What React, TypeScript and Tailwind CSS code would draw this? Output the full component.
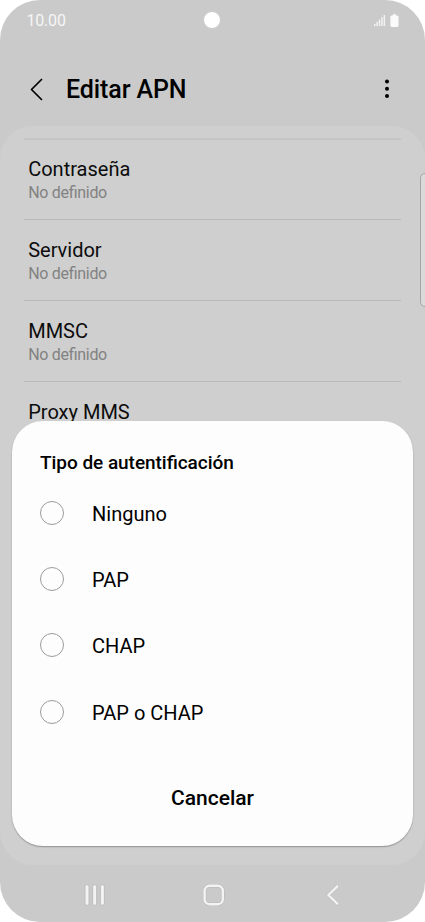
const fields = [
  { label: "Contraseña", value: "No definido" },
  { label: "Servidor", value: "No definido" },
  { label: "MMSC", value: "No definido" },
  { label: "Proxy MMS", value: "No definido" },
];

const options = ["Ninguno", "PAP", "CHAP", "PAP o CHAP"];

function StatusBar() {
  return (
    <div className="relative flex h-10 items-center justify-between pr-[25px] pl-[26.5px] text-white">
      <span className="pt-px text-[16px] leading-5 tracking-[-0.2px] text-[#f6f6f6]">10.00</span>
      <span className="absolute top-[12px] left-[204px] h-4 w-4 rounded-full bg-white" />
      <svg className="mt-[2px]" width="26" height="14" viewBox="0 0 26 14" fill="#fafafa">
        <g opacity="0.85">
          <rect x="0" y="9.8" width="1.5" height="2.2" />
          <rect x="2.4" y="7.8" width="1.5" height="4.2" />
          <rect x="4.8" y="5.6" width="1.5" height="6.4" />
          <rect x="7.2" y="3.2" width="1.5" height="8.8" />
          <rect x="9.6" y="1" width="1.5" height="11" />
        </g>
        <path d="M18.8 0.3h3.2v1.1h1q1.5 0 1.5 1.5v8.6q0 1.4-1.5 1.4h-5.1q-1.5 0-1.5-1.4V2.9q0-1.5 1.5-1.5h0.9z" />
      </svg>
    </div>
  );
}

function Header() {
  return (
    <header className="flex h-[86px] items-center pt-[12px] pr-[34px] pl-[30px]">
      <svg className="-mt-px" width="14" height="24" viewBox="0 0 14 24" fill="none" stroke="#000" strokeWidth="1.7" strokeLinecap="round" strokeLinejoin="round">
        <path d="M11.5 2.5L1.5 12.5l10 10" />
      </svg>
      <h1 className="mt-px ml-[22px] flex-1 text-[25px] leading-8 font-medium tracking-[-0.1px] text-black">Editar APN</h1>
      <svg width="8" height="22" viewBox="0 0 8 22" fill="#000">
        <circle cx="4" cy="3.4" r="2" />
        <circle cx="4" cy="10.7" r="2" />
        <circle cx="4" cy="18" r="2" />
      </svg>
    </header>
  );
}

function NavBar() {
  return (
    <nav className="flex h-[57px] items-center pt-[2px] pl-[83px]">
      <svg width="24" height="24" viewBox="0 0 24 24" fill="#f3f3f3" stroke="#b9b9b9" strokeWidth="0.9">
        <rect x="2" y="1.8" width="4" height="20.4" rx="1.5" />
        <rect x="9.7" y="1.8" width="4" height="20.4" rx="1.5" />
        <rect x="17.4" y="1.8" width="4" height="20.4" rx="1.5" />
      </svg>
      <svg className="ml-[95px]" width="24" height="24" viewBox="0 0 24 24" fill="none">
        <rect x="2.6" y="2.8" width="18.2" height="18.4" rx="5" stroke="#bcbcbc" strokeWidth="3.7" />
        <rect x="2.6" y="2.8" width="18.2" height="18.4" rx="5" stroke="#f3f3f3" strokeWidth="2.4" />
      </svg>
      <svg className="ml-[99px]" width="16" height="24" viewBox="0 0 16 24" fill="none" strokeLinecap="round" strokeLinejoin="round">
        <path d="M12.3 3.3L3.3 12l9 8.7" stroke="#bcbcbc" strokeWidth="3.6" />
        <path d="M12.3 3.3L3.3 12l9 8.7" stroke="#f3f3f3" strokeWidth="2.4" />
      </svg>
    </nav>
  );
}

function AuthDialog() {
  return (
    <section className="absolute top-[421px] left-[12px] flex h-[425px] w-[401px] flex-col rounded-[31px] bg-[#fdfdfd] pt-[30px] shadow-[0_1px_1.5px_rgba(0,0,0,0.3)]">
      <h2 className="pl-[28px] text-[19px] leading-6 font-medium tracking-[-0.04px] text-black [font-feature-settings:'liga']">Tipo de autentificación</h2>
      <ul className="mt-[26px]">
        {options.map((option) => (
          <li key={option} className="flex h-[66.22px] items-start pl-[28px]">
            <span className="h-6 w-6 rounded-full border border-[#9c9c9c]" />
            <span className="ml-[28px] text-[20px] leading-[26px] text-black">{option}</span>
          </li>
        ))}
      </ul>
      <button className="mt-[18.2px] self-center text-[21px] leading-7 font-medium text-black">Cancelar</button>
    </section>
  );
}

export default function App() {
  return (
    <div className="h-[922px] w-[425px] bg-white font-[Roboto,sans-serif]">
      <div className="relative flex h-full flex-col overflow-hidden rounded-[40px] bg-[#cacaca]">
        <StatusBar />
        <Header />
        <main className="h-[739px] overflow-hidden rounded-[33px] bg-[#cfcfcf] px-[24px] pt-[12px]">
          {fields.map((field, i) => (
            <div
              key={field.label}
              className={i === 0
                ? "h-[81px] border-t-2 border-[#c5c5c5] pt-[16px] pl-[4.2px]"
                : "h-[81px] border-t border-[#b9b9b9] pt-[17px] pl-[4.2px]"}
            >
              <div className="text-[20px] leading-[26px] text-[#0c0c0c]">{field.label}</div>
              <div className="text-[16px] leading-[21px] tracking-[-0.3px] text-[#828282] [font-feature-settings:'liga']">{field.value}</div>
            </div>
          ))}
        </main>
        <NavBar />
        <div className="absolute top-[173px] right-[-10px] h-[134px] w-[15px] rounded-[5px] border border-[#a5a5a5] bg-[#dadada]" />
        <AuthDialog />
      </div>
    </div>
  );
}
